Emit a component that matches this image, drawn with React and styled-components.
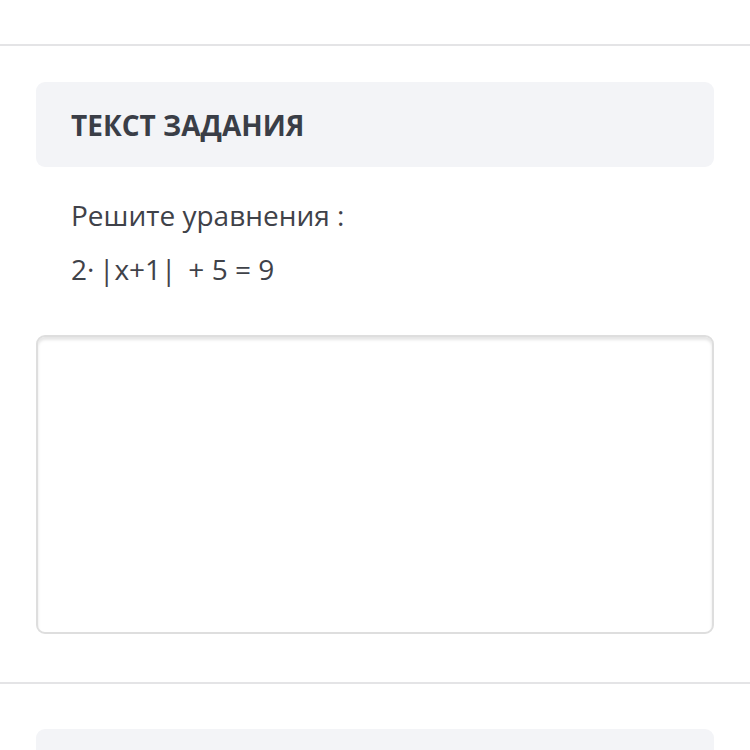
import React from "react";
import styled, { createGlobalStyle } from "styled-components";

const Global = createGlobalStyle`
  html, body { margin: 0; padding: 0; background: #fff; }
  body { font-family: "Open Sans", "Noto Sans", sans-serif; }
`;

const Page = styled.div`
  width: 750px;
  height: 750px;
  overflow: hidden;
  display: flex;
  flex-direction: column;
`;

const Divider = styled.div`
  height: 2px;
  background: #e4e4e6;
  margin-top: ${(p) => p.$top}px;
  flex-shrink: 0;
`;

const Section = styled.div`
  padding: 0 36px 0 36px;
  display: flex;
  flex-direction: column;
`;

const Header = styled.div`
  background: #f3f4f7;
  border-radius: 9px;
  height: 85px;
  margin-top: ${(p) => p.$top}px;
  display: flex;
  align-items: center;
  padding-left: 35px;
  flex-shrink: 0;
`;

const Title = styled.h2`
  margin: 0;
  font-size: 28px;
  font-weight: 700;
  color: #3a3e47;
  letter-spacing: 0;
`;

const Body = styled.div`
  padding: 29px 0 0 35px;
  display: flex;
  flex-direction: column;
  gap: 16px;
`;

const Line = styled.p`
  margin: 0;
  font-size: 28px;
  line-height: 38px;
  color: #3f4249;
  white-space: pre;
`;

const Answer = styled.div`
  margin-top: 47px;
  height: 295px;
  border: 2px solid #dedede;
  border-radius: 9px;
  box-shadow: inset 0 3px 3px rgba(0, 0, 0, 0.1);
  background: #fff;
`;

export default function App() {
  return (
    <Page>
      <Global />
      <Divider $top={44} />
      <Section>
        <Header $top={36}>
          <Title>ТЕКСТ ЗАДАНИЯ</Title>
        </Header>
        <Body>
          <Line>Решите уравнения :</Line>
          <Line>{"2·\u2009|x+1|\u2009 + 5 = 9"}</Line>
        </Body>
        <Answer />
      </Section>
      <Divider $top={48} />
      <Section>
        <Header $top={45} />
      </Section>
    </Page>
  );
}
